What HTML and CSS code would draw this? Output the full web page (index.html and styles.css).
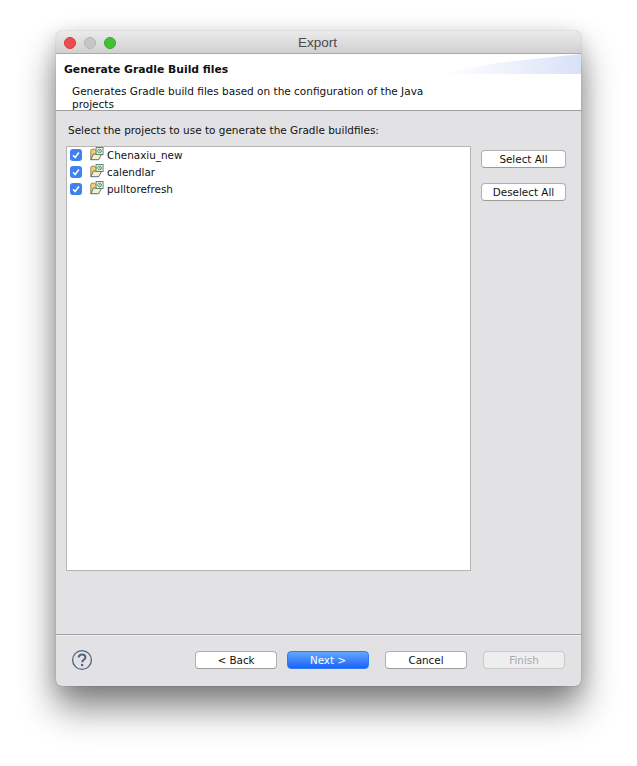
FILE: index.html
```html
<!DOCTYPE html>
<html lang="en">
<head>
<meta charset="utf-8">
<title>Export</title>
<link rel="stylesheet" href="styles.css">
</head>
<body>
<svg class="defs" width="0" height="0" aria-hidden="true">
  <symbol id="project" viewBox="0 0 16 16">
    <path d="M1.5 14.5V3.5L2.5 2.5H6L7 4H9V13Z" fill="#f0cf78" stroke="#8a7a4a" stroke-width="1"/>
    <path d="M1.5 14.5L4.5 8H14L10.5 14.5Z" fill="#fbeec0" stroke="#3f5f94" stroke-width="1"/>
    <rect x="7.5" y="0.5" width="8" height="8" fill="#f4f7ee" stroke="#4a7a5a" stroke-width="1"/>
    <circle cx="11.5" cy="4.5" r="2.2" fill="none" stroke="#4a8a5a" stroke-width="1"/>
    <path d="M11.5 3.2V4.8H13" fill="none" stroke="#4a8a5a" stroke-width=".8"/>
  </symbol>
  <symbol id="check" viewBox="0 0 14 14">
    <path d="M3.6 7.4L6 10L10.4 4" fill="none" stroke="#fff" stroke-width="1.8"/>
  </symbol>
</svg>
<main class="window">
  <header class="titlebar">
    <div class="lights">
      <span class="light light-close"></span>
      <span class="light light-min"></span>
      <span class="light light-max"></span>
    </div>
    <div class="window-title">Export</div>
  </header>
  <section class="banner">
    <h1 class="banner-title">Generate Gradle Build files</h1>
    <p class="banner-desc">Generates Gradle build files based on the configuration of the Java projects</p>
  </section>
  <section class="content">
    <p class="prompt">Select the projects to use to generate the Gradle buildfiles:</p>
    <div class="picker">
      <ul class="project-list">
        <li class="project"><span class="checkbox"><svg class="check-icon"><use href="#check"/></svg></span><svg class="project-icon"><use href="#project"/></svg><span class="project-name">Chenaxiu_new</span></li>
        <li class="project"><span class="checkbox"><svg class="check-icon"><use href="#check"/></svg></span><svg class="project-icon"><use href="#project"/></svg><span class="project-name">calendlar</span></li>
        <li class="project"><span class="checkbox"><svg class="check-icon"><use href="#check"/></svg></span><svg class="project-icon"><use href="#project"/></svg><span class="project-name">pulltorefresh</span></li>
      </ul>
      <div class="side-buttons">
        <button class="btn btn-side" type="button">Select All</button>
        <button class="btn btn-side" type="button">Deselect All</button>
      </div>
    </div>
  </section>
  <footer class="footer">
    <svg class="help" viewBox="0 0 22 22" aria-label="Help" role="img">
      <circle cx="11" cy="11" r="9.4" fill="none" stroke="#4f6280" stroke-width="1.3"/>
      <path d="M7.6 8.6C7.6 6.6 9.2 5.6 11 5.6C12.9 5.6 14.4 6.7 14.4 8.4C14.4 10.6 11.2 10.8 11.2 13.2" fill="none" stroke="#4f6280" stroke-width="2"/>
      <circle cx="11.1" cy="16" r="1.3" fill="#4f6280"/>
    </svg>
    <div class="actions">
      <div class="nav-pair">
        <button class="btn" type="button">&lt; Back</button>
        <button class="btn btn-primary" type="button">Next &gt;</button>
      </div>
      <button class="btn" type="button">Cancel</button>
      <button class="btn btn-disabled" type="button" disabled>Finish</button>
    </div>
  </footer>
</main>
</body>
</html>
```
FILE: styles.css
```css
* { box-sizing: border-box; }
html, body { margin: 0; height: 100%; background: #fff; overflow: hidden; }
body { padding: 31px 56px 0; font-family: "DejaVu Sans", sans-serif; font-size: 10.4px; color: #111; }
.defs { position: absolute; }
.window {
  width: 525px; height: 655px; display: flex; flex-direction: column;
  background: #e2e2e4; border-radius: 6px; overflow: hidden;
  box-shadow: 0 0 1px rgba(0,0,0,.45), 0 22px 36px rgba(0,0,0,.48), 0 4px 20px rgba(0,0,0,.14);
}
.titlebar {
  height: 23px; flex: none; position: relative; display: flex; align-items: center; justify-content: center;
  background: linear-gradient(#ebebeb, #d0d0d0); border-bottom: 1px solid #a9a9a9;
}
.lights { position: absolute; left: 8px; top: 6px; display: flex; gap: 8px; }
.light { width: 12px; height: 12px; border-radius: 50%; }
.light-close { background: #ee4b50; border: 1px solid #d8383c; }
.light-min { background: #c6c6c6; border: 1px solid #b4b4b4; }
.light-max { background: #44c034; border: 1px solid #35a828; }
.window-title { font-family: "Liberation Sans", sans-serif; font-size: 13.5px; color: #4a4a4a; margin-top: 1px; margin-right: 2px; }
.banner {
  height: 57px; flex: none; background-color: #fff; border-bottom: 1px solid #9c9c9c; position: relative;
  padding: 9px 8px 0; overflow: hidden;
}
.banner::after {
  content: ""; position: absolute; right: 0; top: 0; width: 140px; height: 20px;
  background: linear-gradient(90deg, rgba(214,223,246,0), rgba(226,232,250,.6) 50%, #d8e1f7);
  clip-path: polygon(0 100%, 40% 45%, 100% 0, 100% 100%);
}
.banner-title { margin: 0; font-size: 10.8px; font-weight: 700; line-height: 14px; color: #111; position: relative; z-index: 1; }
.banner-desc { margin: 8px 0 0 8px; width: 370px; line-height: 13px; font-size: 10.5px; }
.content { flex: 1; padding: 13px 15px 0 10px; min-height: 0; }
.prompt { margin: 0 0 0 2px; line-height: 13px; font-size: 10.47px; }
.picker { display: flex; margin-top: 9px; }
.project-list {
  list-style: none; margin: 0; padding: 0; width: 405px; height: 425px;
  background: #fff; border: 1px solid #b5b5b5;
}
.project { height: 17px; display: flex; align-items: center; padding-left: 3px; }
.project-icon { width: 15px; height: 14px; margin-left: 7px; margin-right: 3px; margin-top: -4px; }
.project-name { margin-top: -2px; }
.checkbox { width: 12px; height: 12px; border-radius: 3px; background: #3d82f0; display: block; margin-top: -1px; }
.check-icon { width: 12px; height: 12px; display: block; }
.side-buttons { display: flex; flex-direction: column; gap: 15px; margin: 4px 0 0 10px; }
.btn {
  width: 85px; height: 18px; padding: 0; font: inherit; color: #111; background: #fff;
  border: 1px solid #b0b0b0; border-bottom-color: #9c9c9c; border-radius: 4px;
}
.btn-primary { background: linear-gradient(#62a8fd, #1b62f8); border-color: #2f7cf6; color: #fff; }
.btn-disabled { background: #eeeeef; border-color: #c9c9c9; color: #a8a8a8; }
.footer {
  height: 52px; flex: none; border-top: 1px solid #a4a4a4; display: flex; align-items: center; padding: 0 16px 0 15px;
  box-shadow: inset 0 1px 0 #f0f0f0;
}
.help { width: 22px; height: 22px; margin-top: -2px; flex: none; }
.actions { display: flex; gap: 16px; margin-left: 102px; margin-top: -2px; }
.nav-pair { display: flex; gap: 10px; }
.actions .btn { width: 82px; }
```
